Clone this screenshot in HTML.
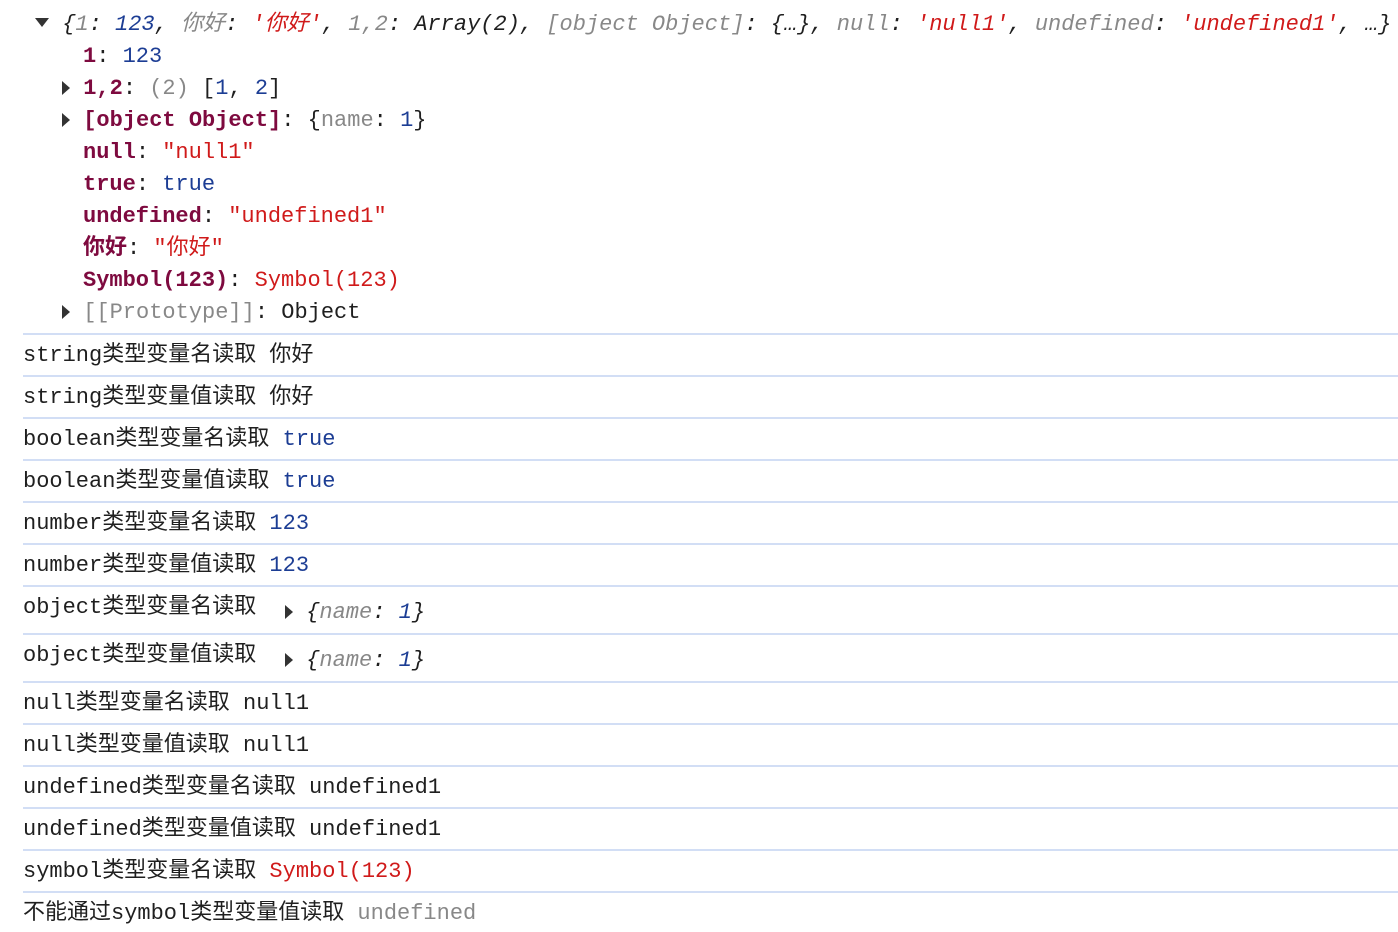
<!DOCTYPE html>
<html><head><meta charset="utf-8"><style>
body{margin:0;width:1398px;height:932px;background:#fff;overflow:hidden;position:relative;font-family:"Liberation Mono","Noto Sans CJK SC",monospace;font-size:22px;color:#1f1f1f}
.l{position:absolute;white-space:pre;line-height:32px;height:32px}
.k{color:#7e0a3f;font-weight:bold}
.n{color:#1c3d94}
.s{color:#d01a1a}
.g{color:#888}
.i{font-style:italic}
.sep{position:absolute;left:23px;right:0;height:2px;background:#d2def5}
.tri{display:inline-block;width:0;height:0;border-top:7px solid transparent;border-bottom:7px solid transparent;border-left:8px solid #333;vertical-align:middle;margin-top:-1px}
.trd{display:inline-block;width:0;height:0;border-left:7px solid transparent;border-right:7px solid transparent;border-top:9px solid #333;vertical-align:middle;margin-top:-3px}
</style></head><body>
<div class="l" style="left:35px;top:9px"><span class="trd"></span> <span class="i">{<span class="g">1</span>: <span class="n">123</span>, <span class="g">你好</span>: <span class="s">'你好'</span>, <span class="g">1,2</span>: Array(2), <span class="g">[object Object]</span>: {…}, <span class="g">null</span>: <span class="s">'null1'</span>, <span class="g">undefined</span>: <span class="s">'undefined1'</span>, …}</span></div>
<div class="l" style="left:83px;top:41px"><span class="k">1</span>: <span class="n">123</span></div>
<div class="l" style="left:62px;top:73px"><span class="tri"></span> <span class="k">1,2</span>: <span class="g">(2)</span> [<span class="n">1</span>, <span class="n">2</span>]</div>
<div class="l" style="left:62px;top:105px"><span class="tri"></span> <span class="k">[object Object]</span>: {<span class="g">name</span>: <span class="n">1</span>}</div>
<div class="l" style="left:83px;top:137px"><span class="k">null</span>: <span class="s">"null1"</span></div>
<div class="l" style="left:83px;top:169px"><span class="k">true</span>: <span class="n">true</span></div>
<div class="l" style="left:83px;top:201px"><span class="k">undefined</span>: <span class="s">"undefined1"</span></div>
<div class="l" style="left:83px;top:233px"><span class="k">你好</span>: <span class="s">"你好"</span></div>
<div class="l" style="left:83px;top:265px"><span class="k">Symbol(123)</span>: <span class="s">Symbol(123)</span></div>
<div class="l" style="left:62px;top:297px"><span class="tri"></span> <span class="g">[[Prototype]]</span>: Object</div>

<div class="sep" style="top:333px"></div>
<div class="l" style="left:23px;top:340px">string类型变量名读取 你好</div>
<div class="sep" style="top:375px"></div>
<div class="l" style="left:23px;top:382px">string类型变量值读取 你好</div>
<div class="sep" style="top:417px"></div>
<div class="l" style="left:23px;top:424px">boolean类型变量名读取 <span class="n">true</span></div>
<div class="sep" style="top:459px"></div>
<div class="l" style="left:23px;top:466px">boolean类型变量值读取 <span class="n">true</span></div>
<div class="sep" style="top:501px"></div>
<div class="l" style="left:23px;top:508px">number类型变量名读取 <span class="n">123</span></div>
<div class="sep" style="top:543px"></div>
<div class="l" style="left:23px;top:550px">number类型变量值读取 <span class="n">123</span></div>
<div class="sep" style="top:585px"></div>
<div class="l" style="left:23px;top:592px">object类型变量名读取</div>
<div class="l i" style="left:285px;top:597px"><span class="tri"></span> {<span class="g">name</span>: <span class="n">1</span>}</div>
<div class="sep" style="top:633px"></div>
<div class="l" style="left:23px;top:640px">object类型变量值读取</div>
<div class="l i" style="left:285px;top:645px"><span class="tri"></span> {<span class="g">name</span>: <span class="n">1</span>}</div>
<div class="sep" style="top:681px"></div>
<div class="l" style="left:23px;top:688px">null类型变量名读取 null1</div>
<div class="sep" style="top:723px"></div>
<div class="l" style="left:23px;top:730px">null类型变量值读取 null1</div>
<div class="sep" style="top:765px"></div>
<div class="l" style="left:23px;top:772px">undefined类型变量名读取 undefined1</div>
<div class="sep" style="top:807px"></div>
<div class="l" style="left:23px;top:814px">undefined类型变量值读取 undefined1</div>
<div class="sep" style="top:849px"></div>
<div class="l" style="left:23px;top:856px">symbol类型变量名读取 <span class="s">Symbol(123)</span></div>
<div class="sep" style="top:891px"></div>
<div class="l" style="left:23px;top:898px">不能通过symbol类型变量值读取 <span class="g">undefined</span></div>
</body></html>
